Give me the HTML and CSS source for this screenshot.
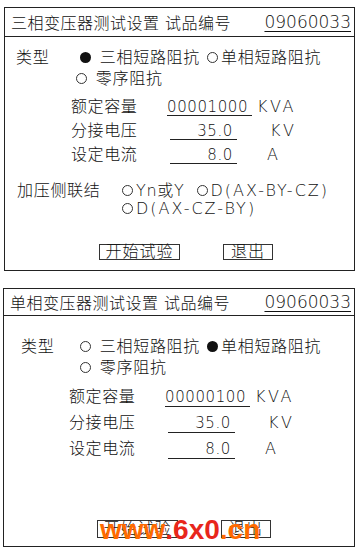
FILE: index.html
```html
<!DOCTYPE html>
<html lang="zh-CN">
<head>
  <meta charset="UTF-8">
  <meta name="viewport" content="width=device-width, initial-scale=1.0">
  <title>变压器测试设置</title>
  <link rel="stylesheet" href="styles.css">
</head>
<body>

<div class="panel p1">
  <div class="head"><span class="title">三相变压器测试设置 试品编号</span><span class="serial">09060033</span></div>
  <div class="body">
    <div class="type-row">
      <span class="type-label">类型</span>
      <div class="opts">
        <div><span class="opt"><i class="dot on"></i> 三相短路阻抗</span><span class="opt"><i class="dot"></i>单相短路阻抗</span></div>
        <div><span class="opt first"><i class="dot"></i> 零序阻抗</span></div>
      </div>
    </div>
    <div class="params">
      <div class="prow"><span class="plabel">额定容量</span><span class="field wide">00001000</span><span class="unit u1">KVA</span></div>
      <div class="prow"><span class="plabel">分接电压</span><span class="field">35.0</span><span class="unit u2">KV</span></div>
      <div class="prow"><span class="plabel">设定电流</span><span class="field">8.0</span><span class="unit u3">A</span></div>
    </div>
    <div class="conn">
      <span class="conn-label">加压侧联结</span>
      <div class="conn-opts">
        <div><span class="copt"><i class="dot"></i>Yn或Y</span><span class="copt delta"><i class="dot"></i>D(AX-BY-CZ)</span></div>
        <div><span class="copt delta"><i class="dot"></i>D(AX-CZ-BY)</span></div>
      </div>
    </div>
    <div class="buttons">
      <span class="btn start">开始试验</span>
      <span class="btn quit">退出</span>
    </div>
  </div>
</div>

<div class="panel p2">
  <div class="head"><span class="title">单相变压器测试设置 试品编号</span><span class="serial">09060033</span></div>
  <div class="body">
    <div class="type-row">
      <span class="type-label">类型</span>
      <div class="opts">
        <div><span class="opt"><i class="dot"></i> 三相短路阻抗</span><span class="opt"><i class="dot on"></i>单相短路阻抗</span></div>
        <div><span class="opt"><i class="dot"></i> 零序阻抗</span></div>
      </div>
    </div>
    <div class="params">
      <div class="prow"><span class="plabel">额定容量</span><span class="field wide">00000100</span><span class="unit u1">KVA</span></div>
      <div class="prow"><span class="plabel">分接电压</span><span class="field">35.0</span><span class="unit u2">KV</span></div>
      <div class="prow"><span class="plabel">设定电流</span><span class="field">8.0</span><span class="unit u3">A</span></div>
    </div>
    <div class="buttons">
      <span class="btn start">开始试验</span>
      <span class="btn quit">退出</span>
      <span class="mark">www<b>.6x0</b>.cn</span>
    </div>
  </div>
</div>

</body>
</html>
```

FILE: styles.css
```css
body { margin: 0; padding: 7px 0 0 0; background: #fff; color: #111; font-family: "DejaVu Sans", "Noto Sans CJK SC", sans-serif; font-size: 16px; font-weight: 300; }

.panel { border: 1px solid #222; box-sizing: border-box; background: #fff; }
.p1 { margin-left: 4px; width: 351px; height: 264px; }
.p2 { margin: 17px 0 0 3px; width: 352px; height: 259px; }

.head { display: flex; justify-content: space-between; align-items: center; border-bottom: 1px solid #222; padding: 0 3px 0 6px; letter-spacing: 0.5px; }
.p1 .head { height: 28px; }
.p2 .head { height: 26px; padding-left: 6px; }
.serial { font-size: 17px; text-decoration: underline; text-underline-offset: 3px; letter-spacing: 0; }

.type-row { display: flex; line-height: 21px; letter-spacing: 0.7px; }
.p1 .type-row { padding: 10px 0 0 11px; }
.p2 .type-row { padding: 20px 0 0 17px; }
.type-label { width: 64px; }
.p2 .type-label { width: 59px; }
.opt { margin-right: 7px; }
.opt.first { margin-left: -4px; }

.dot { display: inline-block; width: 9px; height: 9px; border: 1px solid #333; border-radius: 50%; margin-right: 3px; vertical-align: 0; }
.dot.on { width: 11px; height: 11px; border: none; background: #111; }

.params { padding-left: 66px; letter-spacing: 0.6px; }
.p1 .params { margin-top: 6px; }
.p2 .params { margin-top: 6px; padding-left: 65px; }
.prow { display: flex; height: 24px; }
.p2 .prow { height: 26px; }
.plabel { width: 96px; line-height: 24px; }
.p2 .plabel { line-height: 26px; }
.field { box-sizing: content-box; width: 63px; margin-left: 3px; padding-right: 4px; margin-top: 4px; height: 16px; line-height: 16px; text-align: right; border-bottom: 1px solid #222; font-size: 15px; }
.p2 .field { height: 18px; line-height: 18px; }
.field.wide { width: 85px; margin-left: 0; padding-right: 0; text-align: left; }
.unit { line-height: 24px; letter-spacing: 2.5px; }
.p2 .unit { line-height: 26px; }
.u1 { margin-left: 5px; }
.u2 { margin-left: 33px; }
.u3 { margin-left: 30px; }

.conn { display: flex; margin-top: 15px; padding-left: 12px; line-height: 18px; letter-spacing: 0.7px; }
.conn-label { width: 105px; }
.copt { margin-right: 12px; }
.copt.delta { letter-spacing: 2px; }

.buttons { position: relative; display: flex; padding-left: 94px; }
.p1 .buttons { margin-top: 26px; }
.p2 .buttons { margin-top: 58px; padding-left: 93px; }
.btn { height: 16px; line-height: 14px; box-sizing: border-box; border: 1px solid #333; letter-spacing: 1px; text-align: center; }
.p2 .btn { height: 18px; line-height: 16px; }
.btn.start { width: 81px; }
.btn.quit { width: 50px; margin-left: 43px; }

.mark { position: absolute; left: 96px; top: -6px; font-family: "Liberation Sans", Arial, sans-serif; font-weight: bold; font-size: 28px; color: #ff6a00; letter-spacing: 0; }
.mark b { color: #e8261c; }
```
